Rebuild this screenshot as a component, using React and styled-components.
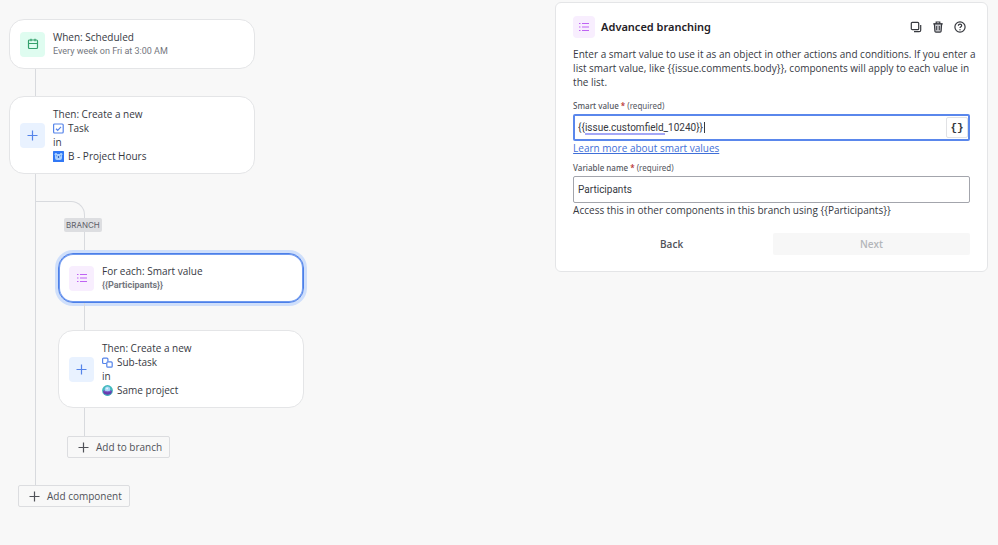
// 3rd-party imports

import React, { useState } from "react";
import styled, { createGlobalStyle } from "styled-components";

// global styles

const GlobalStyle = createGlobalStyle`
  * {
    box-sizing: border-box;
  }

  body {
    margin: 0;
    background-color: #f8f8f8;
    color: #37393f;
    font-family: "Open Sans", "Noto Sans", sans-serif;
    font-size: 10px;
    line-height: 14px;
  }

  button,
  input {
    font: inherit;
    color: inherit;
  }
`;

// constants

const lineColor = "#d8dade";

const tones = {
  green: { background: "#dffcf0", color: "#35a06c" },
  blue: { background: "#e9f2ff", color: "#5584ea" },
  purple: { background: "#f8eefe", color: "#bf63f3" }
};

// layout

const Page = styled.main`
  display: grid;
  grid-template-columns: 5fr 4fr;
  align-items: start;
  column-gap: 5px;
  padding: 2px 10px 38px 9px;
`;

const Flow = styled.section`
  display: flex;
  flex-direction: column;
  align-items: flex-start;
  padding-top: 17px;
`;

const Branch = styled.div`
  display: flex;
  flex-direction: column;
  align-items: flex-start;
  align-self: stretch;
  margin-left: 26px;
  padding: 27px 0;
  border-left: 1px solid ${lineColor};
`;

const BranchCurve = styled.div`
  width: 49px;
  height: 17px;
  border-top: 1px solid ${lineColor};
  border-right: 1px solid ${lineColor};
  border-top-right-radius: 14px;
`;

const BranchSteps = styled.div`
  display: flex;
  flex-direction: column;
  align-items: flex-start;
  align-self: stretch;
  margin-left: 22px;
`;

const BranchLabel = styled.span`
  margin-left: 6px;
  padding: 0 2px;
  border-radius: 2px;
  background-color: #dddee1;
  color: #5d6068;
  font-family: Inter, sans-serif;
  font-size: 8px;
`;

const Connector = styled.div`
  width: 1px;
  height: ${({ $height }) => $height}px;
  margin-left: 26px;
  background-color: ${lineColor};
`;

// step cards

const Card = styled.article`
  display: flex;
  align-items: center;
  gap: 8px;
  width: 100%;
  max-width: 246px;
  padding: 10px;
  border: 1px solid #e4e5e7;
  border-radius: 15px;
  background-color: #ffffff;

  ${({ $selected }) =>
    $selected &&
    `
    border-color: #4c7fe8;
    box-shadow: inset 0 0 0 1px #6f9af0, 0 0 0 3px #cfdffb;
  `};
`;

const IconTile = styled.span`
  display: flex;
  flex: none;
  align-items: center;
  justify-content: center;
  width: ${({ $size }) => $size}px;
  height: ${({ $size }) => $size}px;
  border-radius: 4px;
  background-color: ${({ $tone }) => tones[$tone].background};
  color: ${({ $tone }) => tones[$tone].color};
`;

const CardLine = styled.div`
  display: flex;
  align-items: center;
  gap: 4px;
`;

const CardNote = styled.div`
  color: #73767e;
  font-family: Roboto, sans-serif;
  font-size: 9px;
  font-weight: ${({ $strong }) => ($strong ? 700 : 400)};
`;

const AddButton = styled.button`
  display: flex;
  align-items: center;
  gap: 7px;
  height: 22px;
  margin-left: 9px;
  padding: 0 7px 0 10px;
  border: 1px solid #dcdde0;
  border-radius: 2px;
  background-color: transparent;
  color: #505258;
  font-weight: 500;
`;

// side panel

const Panel = styled.form`
  padding: 13px 17px 16px;
  border: 1px solid #e4e5e7;
  border-radius: 6px;
  background-color: #ffffff;
`;

const PanelHeader = styled.header`
  display: flex;
  align-items: center;
  gap: 6px;
`;

const PanelTitle = styled.h2`
  flex: 1;
  margin: 0;
  color: #1f2126;
  font-family: "Noto Sans", sans-serif;
  font-size: 11px;
  font-weight: 600;
`;

const PanelTools = styled.div`
  display: flex;
  gap: 2px;
`;

const IconButton = styled.button`
  display: flex;
  align-items: center;
  justify-content: center;
  width: 20px;
  height: 20px;
  padding: 0;
  border: 0;
  background: none;
  color: #37393f;
`;

const Description = styled.p`
  margin: 9px -9px 8px 0;
`;

const FieldLabel = styled.label`
  display: block;
  color: #55585f;
  font-family: "Noto Sans", sans-serif;
  font-size: 8px;
  font-weight: 500;
  line-height: 17px;

  span {
    color: #b3261e;
  }

  small {
    font-size: 8px;
    font-weight: 400;
  }
`;

const FieldBox = styled.div`
  position: relative;
  display: flex;
  align-items: center;
  height: 27px;
  padding: 0 0 0 ${({ $active }) => ($active ? 3 : 4)}px;
  border: ${({ $active }) => ($active ? "2px solid #5a87ec" : "1px solid #a3a5ac")};
  border-radius: 2px;
`;

const TextInput = styled.input`
  flex: 1;
  min-width: 0;
  height: 20px;
  padding: 0;
  border: 0;
  outline: none;
  background: none;
  font-family: Roboto, sans-serif;
`;

const SpellingMark = styled.span`
  position: absolute;
  bottom: 4px;
  left: 10px;
  width: 80px;
  height: 2px;
  background-color: #a3a6f7;
`;

const Caret = styled.span`
  position: absolute;
  top: 6px;
  left: 129px;
  width: 1px;
  height: 11px;
  background-color: #37393f;
`;

const BracesButton = styled.button`
  width: 22px;
  height: 21px;
  padding: 0;
  border: 1px solid #e1e2e5;
  border-radius: 2px;
  background-color: #ffffff;
  font-family: "Liberation Mono", monospace;
  font-size: 11px;
  font-weight: 700;
`;

const HelpLink = styled.a`
  display: block;
  width: fit-content;
  margin-bottom: 4px;
  color: #3f6fd8;
  text-decoration: underline;
`;

const Help = styled.div`
  margin-bottom: 16px;
`;

const Actions = styled.div`
  display: grid;
  grid-template-columns: 1fr 1fr;
  gap: 3px;
`;

const ActionButton = styled.button`
  height: 22px;
  border: 0;
  border-radius: 2px;
  background: none;
  color: #505258;
  font-weight: 600;

  &:disabled {
    background-color: #f7f7f7;
    color: #b4b6ba;
  }
`;

// icons

const CalendarIcon = () => (
  <svg width="12" height="12" viewBox="0 0 12 12" fill="none" stroke="currentColor">
    <rect x="1.5" y="2" width="9" height="8.5" rx="1" strokeWidth="1.2" />
    <path d="M1.5 5.5h9M4 .8v2.4M8 .8v2.4" strokeWidth="1.2" />
  </svg>
);

const PlusIcon = () => (
  <svg width="11" height="11" viewBox="0 0 11 11" fill="none" stroke="currentColor">
    <path d="M5.5 .5v10M.5 5.5h10" strokeWidth="1.2" />
  </svg>
);

const ListIcon = () => (
  <svg width="12" height="10" viewBox="0 0 12 10" fill="none" stroke="currentColor">
    <path d="M1 1.5h1.5M1 5h1.5M1 8.5h1.5M4 1.5h7M4 5h7M4 8.5h7" strokeWidth="1.2" />
  </svg>
);

const TaskIcon = () => (
  <svg width="11" height="11" viewBox="0 0 11 11" fill="none" stroke="#5584ea">
    <rect x=".6" y="1" width="9.6" height="9" rx="1" strokeWidth="1.2" />
    <path d="M3 5.7l1.7 1.6L8 3.8" strokeWidth="1.2" />
  </svg>
);

const SubtaskIcon = () => (
  <svg width="11" height="11" viewBox="0 0 11 11" fill="none" stroke="#5584ea">
    <path
      d="M4.5 6.5H1.6a1 1 0 0 1-1-1V2.1a1 1 0 0 1 1-1h3.3a1 1 0 0 1 1 1v2.4"
      strokeWidth="1.2"
    />
    <rect x="4.8" y="4.9" width="5.4" height="5.3" rx="1" strokeWidth="1.2" />
  </svg>
);

const ProjectAvatar = () => (
  <svg width="11" height="11" viewBox="0 0 11 11">
    <rect width="11" height="11" rx=".5" fill="#3178f5" />
    <circle cx="2.9" cy="3.2" r="1.3" fill="#a9d0ff" />
    <circle cx="8.1" cy="3.2" r="1.3" fill="#a9d0ff" />
    <rect x="2" y="3" width="7" height="6" rx="2" fill="#a9d0ff" />
    <rect x="4.8" y="5" width="1.4" height="2" rx=".7" fill="#2457b8" />
    <path d="M3.2 4.8h.8M7 4.8h.8" stroke="#2c66d0" strokeWidth=".8" />
  </svg>
);

const SameProjectAvatar = () => (
  <svg width="11" height="11" viewBox="0 0 11 11">
    <circle cx="5.5" cy="5.5" r="5.4" fill="#42b9bd" />
    <path d="M1 5.8a4.5 4.5 0 0 0 9 0z" fill="#693bae" />
    <circle cx="5.5" cy="4.3" r="2.7" fill="#a5d6f5" />
    <path d="M2 5.6c1.2 1.5 5.8 1.5 7 0" fill="none" stroke="#7a61c9" strokeWidth="1.1" />
    <path d="M2.8 9.4c1.4 1 4 1 5.4 0" fill="none" stroke="#42b9bd" strokeWidth=".8" />
    <circle cx="5.1" cy="3.6" r="1" fill="#e3f4ff" />
  </svg>
);

const CopyIcon = () => (
  <svg width="12" height="12" viewBox="0 0 12 12" fill="none" stroke="currentColor">
    <rect x="1.3" y="1.3" width="7.4" height="7.4" rx="1" strokeWidth="1.2" />
    <path d="M10.7 4v5.2a1.5 1.5 0 0 1-1.5 1.5H4" strokeWidth="1.2" />
  </svg>
);

const TrashIcon = () => (
  <svg width="12" height="12" viewBox="0 0 12 12" fill="none" stroke="currentColor">
    <path d="M1.3 2.8h9.4M4.2 2.6V1h3.6v1.6" strokeWidth="1.2" />
    <path
      d="M2.4 3l.5 7.2a1 1 0 0 0 1 .9h4.2a1 1 0 0 0 1-.9L9.6 3z"
      fill="#c9cace"
      strokeWidth="1.2"
    />
    <path d="M4.7 5v4.2M7.3 5v4.2" strokeWidth="1" />
  </svg>
);

const HelpIcon = () => (
  <svg width="12" height="12" viewBox="0 0 12 12" fill="none" stroke="currentColor">
    <circle cx="6" cy="6" r="5.1" strokeWidth="1.2" />
    <path d="M4.4 4.7c0-2.1 3.3-2 3.3 0C7.7 5.8 6 5.8 6 7.1" strokeWidth="1.2" />
    <circle cx="6" cy="8.7" r=".7" fill="currentColor" stroke="none" />
  </svg>
);

// components

const CreateCard = ({ typeIcon, type, projectIcon, project }) => (
  <Card>
    <IconTile $size={25} $tone="blue">
      <PlusIcon />
    </IconTile>
    <div>
      <CardLine>Then: Create a new</CardLine>
      <CardLine>
        {typeIcon}
        {type}
      </CardLine>
      <CardLine>in</CardLine>
      <CardLine>
        {projectIcon}
        {project}
      </CardLine>
    </div>
  </Card>
);

const RequiredLabel = ({ htmlFor, children }) => (
  <FieldLabel htmlFor={htmlFor}>
    {children} <span>*</span> <small>(required)</small>
  </FieldLabel>
);

const RuleFlow = () => (
  <Flow>
    <Card>
      <IconTile $size={25} $tone="green">
        <CalendarIcon />
      </IconTile>
      <div>
        <CardLine>When: Scheduled</CardLine>
        <CardNote>Every week on Fri at 3:00 AM</CardNote>
      </div>
    </Card>
    <Connector $height={27} />
    <CreateCard
      typeIcon={<TaskIcon />}
      type="Task"
      projectIcon={<ProjectAvatar />}
      project="B - Project Hours"
    />
    <Branch>
      <BranchCurve />
      <BranchSteps>
        <BranchLabel>BRANCH</BranchLabel>
        <Connector $height={21} />
        <Card $selected>
          <IconTile $size={25} $tone="purple">
            <ListIcon />
          </IconTile>
          <div>
            <CardLine>For each: Smart value</CardLine>
            <CardNote $strong>{"{{Participants}}"}</CardNote>
          </div>
        </Card>
        <Connector $height={27} />
        <CreateCard
          typeIcon={<SubtaskIcon />}
          type="Sub-task"
          projectIcon={<SameProjectAvatar />}
          project="Same project"
        />
        <Connector $height={28} />
        <AddButton type="button">
          <PlusIcon />
          Add to branch
        </AddButton>
      </BranchSteps>
    </Branch>
    <AddButton type="button">
      <PlusIcon />
      Add component
    </AddButton>
  </Flow>
);

const BranchingPanel = () => {
  const [smartValue, setSmartValue] = useState("{{issue.customfield_10240}}");
  const [variable, setVariable] = useState("Participants");

  return (
    <Panel>
      <PanelHeader>
        <IconTile $size={22} $tone="purple">
          <ListIcon />
        </IconTile>
        <PanelTitle>Advanced branching</PanelTitle>
        <PanelTools>
          <IconButton type="button" aria-label="Duplicate">
            <CopyIcon />
          </IconButton>
          <IconButton type="button" aria-label="Delete">
            <TrashIcon />
          </IconButton>
          <IconButton type="button" aria-label="Help">
            <HelpIcon />
          </IconButton>
        </PanelTools>
      </PanelHeader>

      <Description>
        {
          "Enter a smart value to use it as an object in other actions and conditions. If you enter a list smart value, like {{issue.comments.body}}, components will apply to each value in the list."
        }
      </Description>

      <RequiredLabel htmlFor="smart-value">Smart value</RequiredLabel>
      <FieldBox $active>
        <TextInput
          id="smart-value"
          required
          spellCheck={false}
          value={smartValue}
          onChange={event => setSmartValue(event.target.value)}
        />
        <SpellingMark />
        <Caret />
        <BracesButton type="button" aria-label="Insert smart value">
          {"{}"}
        </BracesButton>
      </FieldBox>
      <HelpLink href="#smart-values">Learn more about smart values</HelpLink>

      <RequiredLabel htmlFor="variable-name">Variable name</RequiredLabel>
      <FieldBox>
        <TextInput
          id="variable-name"
          required
          value={variable}
          onChange={event => setVariable(event.target.value)}
        />
      </FieldBox>
      <Help>{`Access this in other components in this branch using {{${variable}}}`}</Help>

      <Actions>
        <ActionButton type="button">Back</ActionButton>
        <ActionButton type="submit" disabled>
          Next
        </ActionButton>
      </Actions>
    </Panel>
  );
};

const App = () => (
  <>
    <GlobalStyle />
    <Page>
      <RuleFlow />
      <BranchingPanel />
    </Page>
  </>
);

export default App;
